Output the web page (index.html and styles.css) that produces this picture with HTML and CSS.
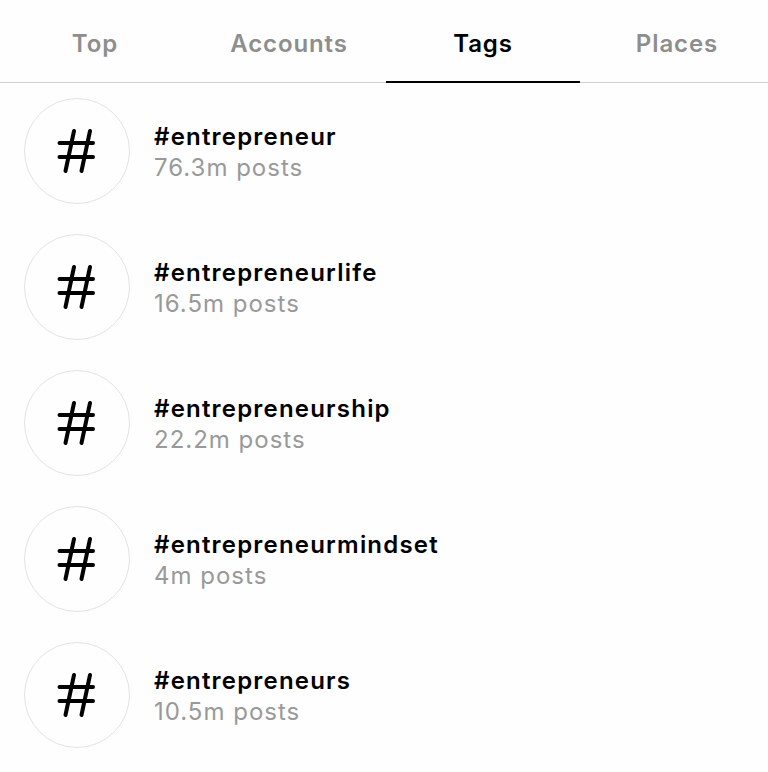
FILE: index.html
```
<!DOCTYPE html>
<html>
<head>
<meta charset="utf-8">
<link rel="stylesheet" href="styles.css">
</head>
<body>
<div class="tabs">
  <div class="tab">Top</div>
  <div class="tab">Accounts</div>
  <div class="tab active">Tags</div>
  <div class="tab">Places</div>
</div>
<div class="list">
  <div class="row">
    <div class="avatar"><svg width="40" height="46" viewBox="0 0 40 46"><path d="M17 3 L8.5 43 M33 3 L24.5 43 M2.5 15 L36 15 M2.5 29 L36 29" stroke="#000" stroke-width="4" stroke-linecap="round" fill="none"/></svg></div>
    <div class="info"><div class="name">#entrepreneur</div><div class="count">76.3m posts</div></div>
  </div>
  <div class="row">
    <div class="avatar"><svg width="40" height="46" viewBox="0 0 40 46"><path d="M17 3 L8.5 43 M33 3 L24.5 43 M2.5 15 L36 15 M2.5 29 L36 29" stroke="#000" stroke-width="4" stroke-linecap="round" fill="none"/></svg></div>
    <div class="info"><div class="name">#entrepreneurlife</div><div class="count">16.5m posts</div></div>
  </div>
  <div class="row">
    <div class="avatar"><svg width="40" height="46" viewBox="0 0 40 46"><path d="M17 3 L8.5 43 M33 3 L24.5 43 M2.5 15 L36 15 M2.5 29 L36 29" stroke="#000" stroke-width="4" stroke-linecap="round" fill="none"/></svg></div>
    <div class="info"><div class="name">#entrepreneurship</div><div class="count">22.2m posts</div></div>
  </div>
  <div class="row">
    <div class="avatar"><svg width="40" height="46" viewBox="0 0 40 46"><path d="M17 3 L8.5 43 M33 3 L24.5 43 M2.5 15 L36 15 M2.5 29 L36 29" stroke="#000" stroke-width="4" stroke-linecap="round" fill="none"/></svg></div>
    <div class="info"><div class="name">#entrepreneurmindset</div><div class="count">4m posts</div></div>
  </div>
  <div class="row">
    <div class="avatar"><svg width="40" height="46" viewBox="0 0 40 46"><path d="M17 3 L8.5 43 M33 3 L24.5 43 M2.5 15 L36 15 M2.5 29 L36 29" stroke="#000" stroke-width="4" stroke-linecap="round" fill="none"/></svg></div>
    <div class="info"><div class="name">#entrepreneurs</div><div class="count">10.5m posts</div></div>
  </div>
</div>
</body>
</html>
```
FILE: styles.css
```
html, body {
  margin: 0;
  padding: 0;
  background: #fefefe;
  font-family: Inter, "Noto Sans", sans-serif;
}
.tabs {
  display: flex;
  height: 82px;
  border-bottom: 1px solid #cfcfcf;
  margin-left: -2px;
}
.tab {
  width: 194px;
  flex: none;
  text-align: center;
  font-size: 24px;
  line-height: 29px;
  font-weight: 600;
  letter-spacing: 0.9px;
  color: #8e8e8e;
  padding-top: 29px;
  box-sizing: border-box;
  margin-bottom: -1px;
}
.tab.active {
  color: #000;
  border-bottom: 2px solid #000;
}
.list {
  display: flex;
  flex-direction: column;
  gap: 30px;
  padding: 15px 0 0 24px;
}
.row {
  display: flex;
  align-items: center;
  gap: 24px;
  height: 106px;
}
.avatar {
  width: 104px;
  height: 104px;
  border: 1px solid #e3e3e3;
  border-radius: 50%;
  display: flex;
  align-items: center;
  justify-content: center;
  flex: none;
}
.info {
  display: flex;
  flex-direction: column;
  margin-top: 2px;
}
.name {
  font-size: 24px;
  font-weight: 600;
  letter-spacing: 1.2px;
  color: #000;
  line-height: 31px;
}
.count {
  font-size: 24px;
  letter-spacing: 1px;
  color: #999;
  line-height: 31px;
}
```
